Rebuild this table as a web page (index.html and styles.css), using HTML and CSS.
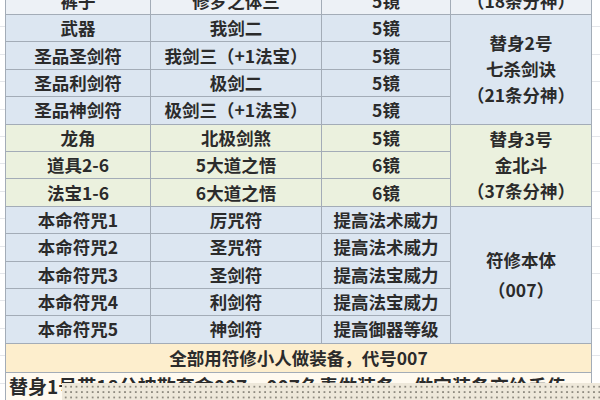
FILE: index.html
```html
<!DOCTYPE html>
<html lang="zh-CN">
<head>
<meta charset="utf-8">
<title>符修配装</title>
<link rel="stylesheet" href="styles.css">
</head>
<body>
<div class="sheet">
  <table class="grid">
    <colgroup><col class="c1"><col class="c2"><col class="c3"><col class="c4"></colgroup>
    <tr class="row top"><td>裤子</td><td>修罗之体三</td><td>5镜</td><td>（18条分神）</td></tr>
    <tr class="row blue"><td>武器</td><td>我剑二</td><td>5镜</td><td rowspan="4" class="merge m2">替身2号<br>七杀剑诀<br>（21条分神）</td></tr>
    <tr class="row blue"><td>圣品圣剑符</td><td>我剑三（+1法宝）</td><td>5镜</td></tr>
    <tr class="row blue"><td>圣品利剑符</td><td>极剑二</td><td>5镜</td></tr>
    <tr class="row blue"><td>圣品神剑符</td><td>极剑三（+1法宝）</td><td>5镜</td></tr>
    <tr class="row green"><td>龙角</td><td>北极剑煞</td><td>5镜</td><td rowspan="3" class="merge m3">替身3号<br>金北斗<br>（37条分神）</td></tr>
    <tr class="row green"><td>道具2-6</td><td>5大道之悟</td><td>6镜</td></tr>
    <tr class="row green"><td>法宝1-6</td><td>6大道之悟</td><td>6镜</td></tr>
    <tr class="row blue"><td>本命符咒1</td><td>厉咒符</td><td>提高法术威力</td><td rowspan="5" class="merge m4">符修本体<br>（007）</td></tr>
    <tr class="row blue"><td>本命符咒2</td><td>圣咒符</td><td>提高法术威力</td></tr>
    <tr class="row blue"><td>本命符咒3</td><td>圣剑符</td><td>提高法宝威力</td></tr>
    <tr class="row blue"><td>本命符咒4</td><td>利剑符</td><td>提高法宝威力</td></tr>
    <tr class="row blue"><td>本命符咒5</td><td>神剑符</td><td>提高御器等级</td></tr>
    <tr class="row orange"><td colspan="4">全部用符修小人做装备，代号007</td></tr>
    <tr class="row note"><td colspan="4" class="left">替身1号带18分神散套命007，007负责做装备，做完装备交给手传</td></tr>
  </table>
  <div class="overlay"></div>
</div>
</body>
</html>
```
FILE: styles.css
```css
html, body {
  margin: 0;
  padding: 0;
  background: #ffffff;
}
.sheet {
  position: relative;
  width: 600px;
  height: 400px;
  overflow: hidden;
  padding-left: 5px;
  box-sizing: border-box;
  background:
    repeating-linear-gradient(to bottom, transparent 0, transparent 26.4px, #e4e6ea 26.4px, #e4e6ea 27.4px);
}
.grid {
  margin-top: -14px;
  border-collapse: collapse;
  table-layout: fixed;
  width: 586px;
  font-family: "Noto Sans CJK SC", "Noto Sans", sans-serif;
  font-weight: 700;
  font-size: 17.5px;
  color: #2b2b2b;
}
.c1 { width: 145px; }
.c2 { width: 171px; }
.c3 { width: 129px; }
.c4 { width: 141px; }
.grid td {
  border: 1px solid #a3acb7;
  text-align: center;
  vertical-align: middle;
  padding: 0;
  line-height: 22px;
  white-space: nowrap;
  overflow: hidden;
}
.row { height: 27.4px; }
.row.top { height: 28px; }
.top td { background: #edf1f6; }
.blue td { background: #dce6f1; }
.green td { background: #ebf1de; }
.orange { height: 29px; }
.orange td { background: #fdeecd; }
.note { height: 29px; }
.note td { background: #fffaf0; vertical-align: top; }
.grid .merge { line-height: 26px; }
.grid .m4 { line-height: 30px; }
.grid td.left {
  text-align: left;
  padding-left: 3px;
  padding-top: 2px;
  font-size: 19px;
}
.overlay {
  position: absolute;
  left: 62px;
  right: 0;
  top: 383px;
  bottom: 0;
  background-color: #eee8da;
  background-image: radial-gradient(circle, #8f8b80 0.9px, transparent 1.2px);
  background-size: 5.4px 5.4px;
  background-position: 1px 1px;
}
```
